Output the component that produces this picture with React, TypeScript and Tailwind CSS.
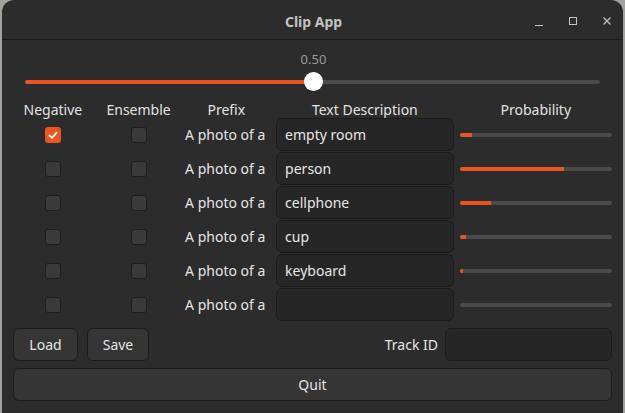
import React from "react";

const rows = [
  { negative: true, ensemble: false, text: "empty room", prob: 0.085 },
  { negative: false, ensemble: false, text: "person", prob: 0.685 },
  { negative: false, ensemble: false, text: "cellphone", prob: 0.205 },
  { negative: false, ensemble: false, text: "cup", prob: 0.04 },
  { negative: false, ensemble: false, text: "keyboard", prob: 0.02 },
  { negative: false, ensemble: false, text: "", prob: 0 },
];

const Checkbox = ({ checked }: { checked: boolean }) =>
  checked ? (
    <div className="w-[16px] h-[16px] rounded-[3px] bg-[#e95420] flex items-center justify-center">
      <svg width="10" height="8" viewBox="0 0 10 8">
        <path d="M1 4 L4 6.8 L9 1.2" fill="none" stroke="#fff" strokeWidth="1.8" />
      </svg>
    </div>
  ) : (
    <div className="w-[16px] h-[16px] rounded-[3px] bg-[#3a3a3a] border border-[#1e1e1e]" />
  );

const Button = ({ label, className }: { label: string; className: string }) => (
  <button
    className={
      "h-[33px] rounded-[6px] bg-[#353535] border border-[#1c1c1c] text-[14px] text-[#e4e4e4] flex items-center justify-center " +
      className
    }
  >
    {label}
  </button>
);

export default function App() {
  return (
    <div
      className="w-[625px] h-[413px] bg-[#a3a39e] pl-[2px] pr-[2px] overflow-hidden"
      style={{ fontFamily: '"Noto Sans", "Open Sans", sans-serif' }}
    >
      <div className="h-full bg-[#2c2c2c] rounded-t-[12px] flex flex-col">
        {/* title bar */}
        <div className="h-[40px] border-b border-[#1b1b1b] flex items-center relative pt-[3px]">
          <div className="flex-1 text-center text-[14px] font-bold text-[#c2c2c2] pl-[2px]">Clip App</div>
          <div className="absolute right-[11px] top-[16px] flex gap-[24px] items-center">
            <svg width="10" height="10" viewBox="0 0 10 10">
              <path d="M1 9.5 H9" stroke="#c4c4c4" strokeWidth="1" />
            </svg>
            <svg width="10" height="10" viewBox="0 0 10 10">
              <rect x="1.5" y="1.5" width="7" height="7" fill="none" stroke="#c4c4c4" strokeWidth="1" />
            </svg>
            <svg width="10" height="10" viewBox="0 0 10 10">
              <path d="M1.5 1.5 L8.5 8.5 M8.5 1.5 L1.5 8.5" stroke="#c4c4c4" strokeWidth="1.2" />
            </svg>
          </div>
        </div>

        <div className="flex flex-col px-[11px]">
          {/* slider */}
          <div className="pt-[10px] text-center text-[13px] leading-[18px] text-[#9a9a9a] pl-[2px]">0.50</div>
          <div className="mt-[4px] h-[19px] flex items-center px-[12px]">
            <div className="flex-1 flex items-center">
              <div className="w-[288px] h-[4px] bg-[#e95420] rounded-l-full" />
              <div className="w-[19px] h-[19px] rounded-full bg-white -mx-[9px] relative" />
              <div className="flex-1 h-[4px] bg-[#4a4a4a] rounded-r-full" />
            </div>
          </div>

          {/* header */}
          <div className="mt-[10px] h-[17px] flex items-center text-[14px] text-[#e2e2e2]">
            <div className="w-[80px] text-center">Negative</div>
            <div className="w-[92px] text-center">Ensemble</div>
            <div className="w-[92px] text-center pr-[8px]">Prefix</div>
            <div className="w-[178px] text-center">Text Description</div>
            <div className="ml-[6px] w-[153px] text-center">Probability</div>
          </div>

          {/* rows */}
          <div className="flex flex-col gap-[1px]">
            {rows.map((r, i) => (
              <div key={i} className="h-[33px] flex items-center text-[14px] text-[#e6e6e6]">
                <div className="w-[80px] flex justify-center">
                  <Checkbox checked={r.negative} />
                </div>
                <div className="w-[92px] flex justify-center">
                  <Checkbox checked={r.ensemble} />
                </div>
                <div className="w-[92px] text-center pr-[10px] whitespace-nowrap">A photo of a</div>
                <div className="w-[178px] h-[33px] rounded-[6px] bg-[#262626] border border-[#1b1b1b] flex items-center px-[8px]">
                  {r.text}
                </div>
                <div className="ml-[6px] w-[153px] h-[4px] rounded-full bg-[#4a4a4a] overflow-hidden">
                  <div className="h-full bg-[#e95420]" style={{ width: `${r.prob * 100}%` }} />
                </div>
              </div>
            ))}
          </div>

          {/* bottom controls */}
          <div className="mt-[7px] flex items-center">
            <Button label="Load" className="w-[65px]" />
            <Button label="Save" className="w-[62px] ml-[9px]" />
            <div className="flex-1" />
            <span className="text-[14px] text-[#e6e6e6]">Track ID</span>
            <div className="ml-[7px] w-[167px] h-[33px] rounded-[6px] bg-[#262626] border border-[#1b1b1b]" />
          </div>
          <Button label="Quit" className="mt-[7px] w-full" />
        </div>
      </div>
    </div>
  );
}
